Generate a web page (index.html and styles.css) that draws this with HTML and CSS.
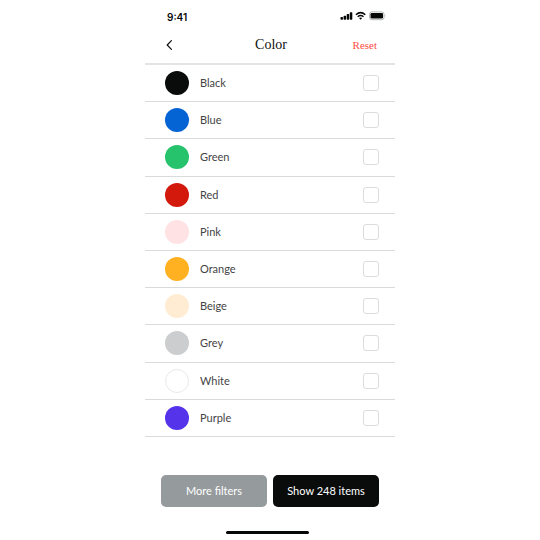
FILE: index.html
```html
<!DOCTYPE html>
<html lang="en">
<head>
<meta charset="utf-8">
<meta name="viewport" content="width=device-width, initial-scale=1">
<title>Color</title>
<link rel="stylesheet" href="styles.css">
</head>
<body>
<main class="phone">
  <div class="status">
    <span class="time">9:41</span>
    <svg class="status-icons" width="46" height="10" viewBox="0 0 46 10" aria-hidden="true">
      <g fill="#050707">
        <rect x="0.5" y="6" width="2.5" height="2.7" rx="0.7"/>
        <rect x="3.6" y="4.7" width="2.5" height="4" rx="0.7"/>
        <rect x="6.7" y="3" width="2.5" height="5.7" rx="0.7"/>
        <rect x="9.8" y="1.2" width="2.5" height="7.5" rx="0.7"/>
        <rect x="30.5" y="2" width="12.5" height="5.6" rx="1.3"/>
      </g>
      <g fill="none" stroke="#050707" stroke-width="1.5">
        <path d="M15.9 3.7Q20.6 -0.5 25.3 3.7"/>
        <path d="M17.7 5.7Q20.6 3.2 23.5 5.7"/>
      </g>
      <path d="M19 7Q20.6 5.8 22.2 7L20.6 8.7Z" fill="#050707"/>
      <rect x="29.5" y="0.9" width="14.5" height="7.8" rx="2.3" fill="none" stroke="#b5b5b5" stroke-width="1"/>
      <path d="M44.8 3.5Q46 4.7 44.8 5.9Z" fill="#a5a5a5"/>
    </svg>
  </div>
  <header class="bar">
    <button class="back" type="button" aria-label="Back">
      <svg width="8" height="10" viewBox="0 0 8 10" aria-hidden="true"><path d="M6.4 0.7L2.2 5L6.4 9.3" fill="none" stroke="#111" stroke-width="1.2" stroke-linecap="round" stroke-linejoin="round"/></svg>
    </button>
    <h1 class="title">Color</h1>
    <button class="reset" type="button">Reset</button>
  </header>
  <form class="filters">
    <div class="list">
      <label class="row"><span class="swatch black"></span><span class="name">Black</span><input class="check" type="checkbox"></label>
      <label class="row"><span class="swatch blue"></span><span class="name">Blue</span><input class="check" type="checkbox"></label>
      <label class="row"><span class="swatch green"></span><span class="name">Green</span><input class="check" type="checkbox"></label>
      <label class="row"><span class="swatch red"></span><span class="name">Red</span><input class="check" type="checkbox"></label>
      <label class="row"><span class="swatch pink"></span><span class="name">Pink</span><input class="check" type="checkbox"></label>
      <label class="row"><span class="swatch orange"></span><span class="name">Orange</span><input class="check" type="checkbox"></label>
      <label class="row"><span class="swatch beige"></span><span class="name">Beige</span><input class="check" type="checkbox"></label>
      <label class="row"><span class="swatch grey"></span><span class="name">Grey</span><input class="check" type="checkbox"></label>
      <label class="row"><span class="swatch white"></span><span class="name">White</span><input class="check" type="checkbox"></label>
      <label class="row"><span class="swatch purple"></span><span class="name">Purple</span><input class="check" type="checkbox"></label>
    </div>
    <div class="actions">
      <button class="action more" type="button">More filters</button>
      <button class="action show" type="submit">Show 248 items</button>
    </div>
  </form>
  <div class="home"></div>
</main>
</body>
</html>
```
FILE: styles.css
```css
* {
  box-sizing: border-box;
}

body {
  margin: 0;
  background: #fff;
  color: #444;
  font-family: Lato, "Open Sans", sans-serif;
}

button {
  margin: 0;
  padding: 0;
  border: 0;
  background: none;
  font: inherit;
  cursor: pointer;
}

.phone {
  width: 100%;
  max-width: 250px;
  margin: 0 auto;
}

.status {
  display: flex;
  align-items: center;
  justify-content: space-between;
  padding: 10px 9px 0 22px;
}

.time {
  color: #050707;
  font: 600 10px/14px Inter, sans-serif;
}

.status-icons {
  margin-bottom: 2px;
}

.bar {
  display: grid;
  grid-template-columns: 1fr auto 1fr;
  align-items: center;
  padding: 12px 18px 9px 20px;
  font-family: "Liberation Serif", serif;
}

.back {
  display: flex;
  justify-self: start;
}

.title {
  margin: 0;
  color: #111;
  font-size: 14px;
  font-weight: 400;
  line-height: 18px;
}

.reset {
  justify-self: end;
  color: #ff4d42;
  font-size: 11px;
  line-height: 16px;
}

.list {
  display: grid;
  grid-auto-rows: 1fr;
  min-height: 374px;
  border-top: 2px solid #e4e4e4;
}

.row {
  display: flex;
  align-items: center;
  padding: 0 16px 0 20px;
  border-bottom: 1px solid #d9dadb;
}

.swatch {
  width: 24px;
  height: 24px;
  margin-right: 11px;
  border-radius: 50%;
}

.name {
  flex: 1;
  font-size: 11px;
  line-height: 16px;
}

.check {
  appearance: none;
  width: 16px;
  height: 16px;
  margin: 0;
  border: 1px solid #dcdcdc;
  border-radius: 3px;
  background: #fff;
}

.check:checked {
  background: #090c0b;
}

.black { background: #090c0b; }
.blue { background: #0464d4; }
.green { background: #26c26c; }
.red { background: #d3180c; }
.pink { background: #ffe3e4; }
.orange { background: #ffb121; }
.beige { background: #ffecd3; }
.grey { background: #cbcdcf; }
.white { background: #fff; border: 1px solid #e9e9e9; }
.purple { background: #5533ea; }

.actions {
  display: grid;
  grid-template-columns: 1fr 1fr;
  gap: 6px;
  padding: 38px 16px 24px;
}

.action {
  height: 32px;
  border-radius: 5px;
  color: #fff;
  font-size: 11px;
  line-height: 16px;
}

.more { background: #959b9d; }
.show { background: #090c0b; }

.home {
  width: 33%;
  height: 3px;
  margin: 0 0 0 81px;
  border-radius: 2px;
  background: #050707;
}
```
